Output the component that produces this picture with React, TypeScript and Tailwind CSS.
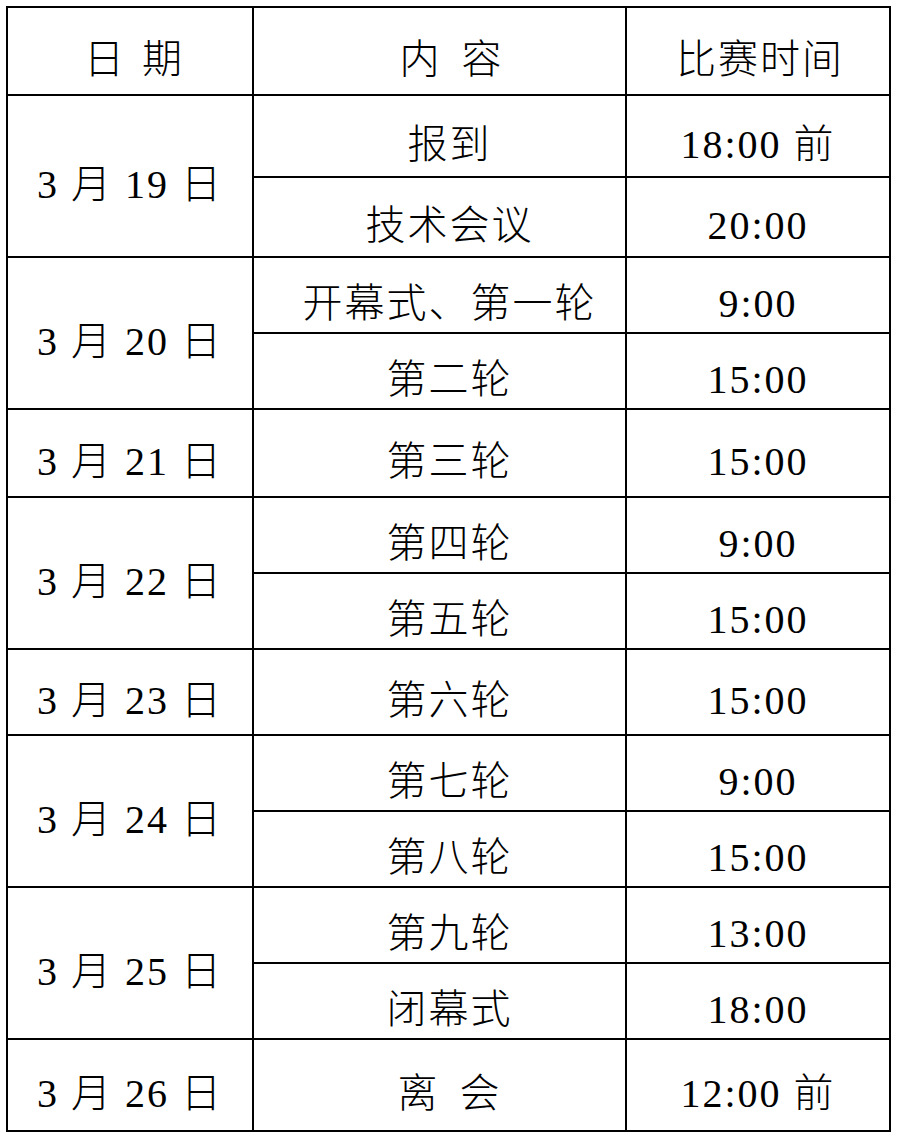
import React from "react";

type Row = { date?: string; span?: number; content: React.ReactNode; time: string };

const Gap = ({ w }: { w: string }) => <span className={`inline-block ${w}`} />;

const rows: Row[] = [
  { date: "3 月 19 日", span: 2, content: "报到", time: "18:00 前" },
  { content: "技术会议", time: "20:00" },
  { date: "3 月 20 日", span: 2, content: "开幕式、第一轮", time: "9:00" },
  { content: "第二轮", time: "15:00" },
  { date: "3 月 21 日", span: 1, content: "第三轮", time: "15:00" },
  { date: "3 月 22 日", span: 2, content: "第四轮", time: "9:00" },
  { content: "第五轮", time: "15:00" },
  { date: "3 月 23 日", span: 1, content: "第六轮", time: "15:00" },
  { date: "3 月 24 日", span: 2, content: "第七轮", time: "9:00" },
  { content: "第八轮", time: "15:00" },
  { date: "3 月 25 日", span: 2, content: "第九轮", time: "13:00" },
  { content: "闭幕式", time: "18:00" },
  {
    date: "3 月 26 日",
    span: 1,
    content: (
      <>
        离<Gap w="w-[20px]" />会
      </>
    ),
    time: "12:00 前",
  },
];

const cell =
  "bg-white flex items-center justify-center pt-[18px] text-black text-[40px] font-light leading-none tracking-[2px] whitespace-nowrap";

export default function App() {
  return (
    <div className="bg-white w-[900px] h-[1140px] pt-[6px] pl-[6px] font-['Liberation_Serif','Noto_Sans_CJK_SC',serif]">
      <div className="grid w-[885px] bg-black p-[2px] gap-[2px] grid-cols-[244px_371px_262px] grid-rows-[86px_80px_78px_74px_74px_86px_74px_74px_84px_74px_74px_74px_74px_90px]">
        <div className={`${cell} pl-[8px]`}>
          日<Gap w="w-[16px]" />期
        </div>
        <div className={`${cell} pl-[24px]`}>
          内<Gap w="w-[20px]" />容
        </div>
        <div className={`${cell} pl-[4px]`}>比赛时间</div>
        {rows.map((r, i) => (
          <React.Fragment key={i}>
            {r.date && (
              <div className={`${cell} ${r.span === 2 ? "row-span-2" : ""}`}>
                {r.date}
              </div>
            )}
            <div className={`${cell} pl-[20px]`}>{r.content}</div>
            <div className={cell}>{r.time}</div>
          </React.Fragment>
        ))}
      </div>
    </div>
  );
}
